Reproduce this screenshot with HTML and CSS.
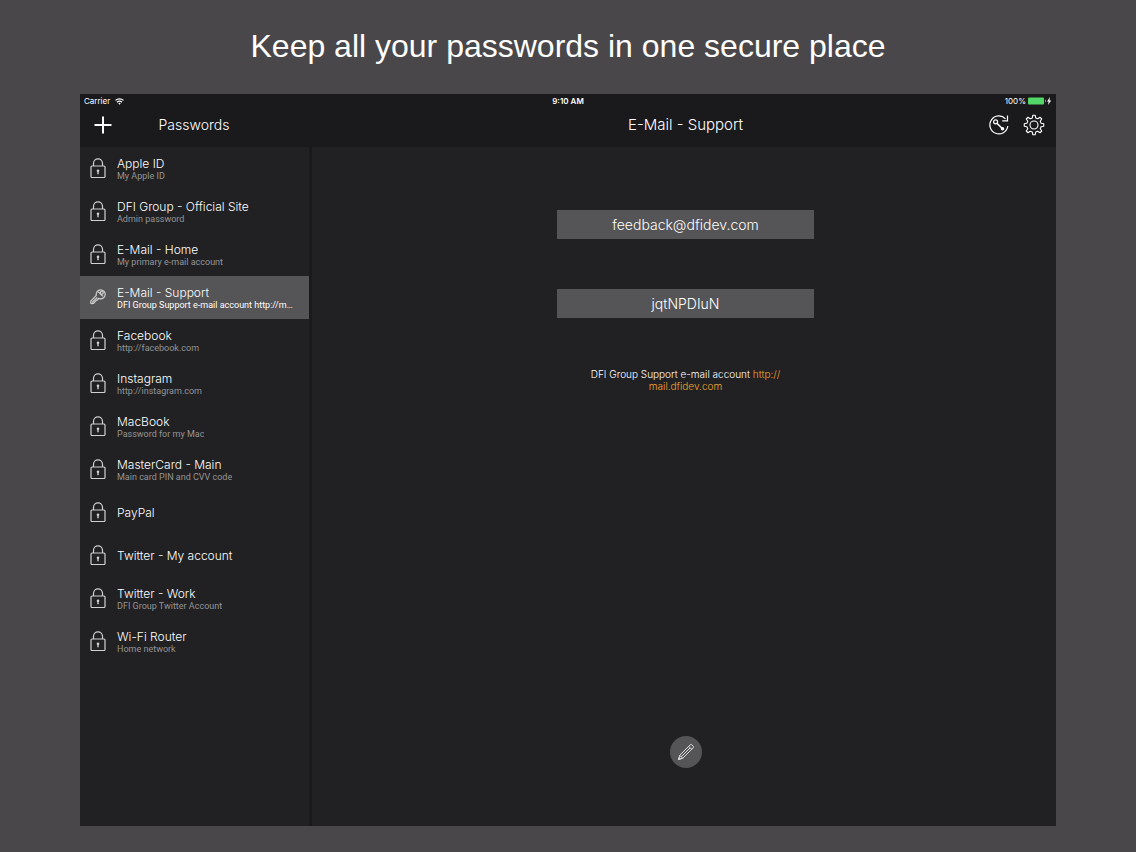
FILE: index.html
```html
<!DOCTYPE html>
<html lang="en">
<head>
<meta charset="UTF-8" />
<meta name="viewport" content="width=device-width, initial-scale=1.0"/>
<title>Passwords</title>
  <link rel="stylesheet" href="styles.css">
</head>

<body>

  <!-- Shared icons -->
  <svg class="sprite" aria-hidden="true">
    <symbol id="icon-lock" viewBox="0 0 16 22">
      <rect x="1" y="8" width="14" height="11.5" rx="1" fill="none" stroke="currentColor" stroke-width="1.2"/>
      <path d="M3.5 8V5.3a4.5 4.5 0 0 1 9 0v2.7" fill="none" stroke="currentColor" stroke-width="1.2"/>
      <circle cx="8" cy="12.8" r="1.3" fill="currentColor"/>
      <path d="M8 12.8v3.4" stroke="currentColor" stroke-width="1.4"/>
    </symbol>
    <symbol id="icon-key" viewBox="0 0 16 22">
      <g fill="none" stroke="currentColor" stroke-width="1.2" stroke-linejoin="round">
        <path d="M6.300 8.300a4.500 4.500 0 1 1 3.300 3.400L8 11.700l-.3 1.300-1.300.2-3 3.300-2 .2-.8-.9.200-1.600z"/>
        <path d="M2 15.700l5.200-5.400M8 4.600l4.900 4.700"/>
        <circle cx="11.800" cy="5.800" r="1.500"/>
      </g>
    </symbol>
  </svg>

  <h1 class="headline">Keep all your passwords in one secure place</h1>

  <div class="device">

    <header class="topbar">
      <div class="status">
        <div class="carrier">
          <span>Carrier</span>
          <svg width="9" height="7" viewBox="0 0 9 7" fill="none" stroke="currentColor" stroke-width="1.2">
            <path d="M.5 2.4a5.8 5.8 0 0 1 8 0M2 4.2a3.7 3.7 0 0 1 5 0"/>
            <path d="M3.3 5.3a1.8 1.8 0 0 1 2.4 0L4.5 6.7z" fill="currentColor" stroke="none"/>
          </svg>
        </div>
        <time class="clock">9:10 AM</time>
        <div class="battery">
          <span>100%</span>
          <svg width="24" height="8" viewBox="0 0 24 8">
            <rect x="0" y="0.5" width="16" height="7" rx="1" fill="#53d769"/>
            <path d="M17 2.5c1.2.5 1.2 2.5 0 3z" fill="#53d769"/>
            <path d="M22 0l-3 4.5h1.7L20 8l3.2-4.5h-1.8z" fill="#fff"/>
          </svg>
        </div>
      </div>

      <nav class="navbar">
        <div class="nav-side">
          <button class="icon-btn" type="button" aria-label="Add password">
            <svg width="18" height="18" viewBox="0 0 18 18" stroke="currentColor" stroke-width="2">
              <path d="M9 .5v17M.5 9h17"/>
            </svg>
          </button>
          <h2 class="list-title">Passwords</h2>
        </div>
        <div class="nav-main">
          <h2>E-Mail - Support</h2>
          <div class="nav-actions">
            <button class="icon-btn" type="button" aria-label="Generate password">
              <svg width="22" height="22" viewBox="0 0 22 22" fill="none" stroke="currentColor" stroke-width="1.2">
                <path d="M19.8 12.2A9 9 0 1 1 17.500 4.800"/>
                <path d="M19.5 1.5v5.300h-5.300"/>
                <circle cx="7.6" cy="7.8" r="2"/>
                <path d="M9 9.200l5 5" stroke-width="1.5"/>
                <circle cx="14.500" cy="14.700" r="1.200" fill="currentColor"/>
              </svg>
            </button>
            <button class="icon-btn" type="button" aria-label="Settings">
              <svg width="22" height="22" viewBox="0 0 22 22" fill="none" stroke="currentColor" stroke-width="1.1" stroke-linejoin="round">
                <circle cx="11" cy="11" r="4"/>
                <path id="gear" d=""/>
              </svg>
            </button>
          </div>
        </div>
      </nav>
    </header>

    <main class="content">
      <!-- Password list -->
      <ul class="password-list" id="password-list"></ul>

      <!-- Details -->
      <section class="detail">
        <div class="fields">
          <input type="text" value="feedback@dfidev.com" aria-label="Login" readonly />
          <input type="text" value="jqtNPDIuN" aria-label="Password" readonly />
          <p class="note">DFI Group Support e-mail account <a href="#">http://<wbr>mail.dfidev.com</a></p>
        </div>
        <button class="edit-btn" type="button" aria-label="Edit">
          <svg width="18" height="18" viewBox="0 0 18 18" fill="none" stroke="currentColor" stroke-width="1" stroke-linejoin="round">
            <path d="M1.500 16.500l1.200-4.200L13.200 1.800q.8-.8 1.600 0l1.400 1.400q.8.8 0 1.600L5.700 15.300z"/>
            <path d="M2.700 12.300l3 3M11.700 3.300l3 3M4.200 13.800l9-9"/>
            <path d="M1.500 16.500l.6-2 1.400 1.400z" fill="currentColor"/>
          </svg>
        </button>
      </section>
    </main>
  </div>

  <script src="script.js"></script>
</body>
</html>
```
FILE: styles.css
```css
:root {
  --page: #49474a;
  --bar: #1a191c;
  --panel: #212123;
  --field: #555456;
  --white: #ffffff;
  --muted: #949496;
  --link: #f5a52e;
}

* {
  box-sizing: border-box;
}

body {
  font-family: Inter, 'Helvetica Neue', sans-serif;
  background: var(--page);
  color: var(--white);
  margin: 0;
  padding: 0 80px 26px;
}

h1, h2, p, ul {
  margin: 0;
  padding: 0;
  font-weight: normal;
}

button, input {
  font: inherit;
  color: inherit;
  border: none;
  border-radius: 0;
}

svg {
  display: block;
  flex: none;
}

.sprite {
  position: absolute;
  width: 0;
  height: 0;
}

.headline {
  font-family: 'Liberation Sans', Arial, sans-serif;
  font-size: 32px;
  line-height: 40px;
  padding: 26px 0 28px;
  text-align: center;
}

.device {
  display: flex;
  flex-direction: column;
  aspect-ratio: 4 / 3;
  background: var(--panel);
}

/* Top bar */
.topbar {
  background: var(--bar);
}

.status {
  display: grid;
  grid-template-columns: 1fr auto 1fr;
  align-items: center;
  padding: 0 4px;
  font-size: 8px;
  line-height: 14px;
}

.carrier, .battery {
  display: flex;
  align-items: center;
  gap: 5px;
}

.battery {
  justify-content: flex-end;
  gap: 2px;
}

.clock {
  font-weight: 600;
}

.navbar {
  display: flex;
  height: 39px;
  padding-bottom: 6px;
}

.navbar h2 {
  font-size: 15px;
  font-weight: 300;
  line-height: 20px;
}

.nav-side {
  position: relative;
  display: flex;
  align-items: center;
  justify-content: center;
  width: 232px;
  padding-right: 4px;
}

.nav-side .icon-btn {
  position: absolute;
  left: 14px;
}

.navbar .list-title {
  font-size: 14px;
}

.nav-main {
  flex: 1;
  display: grid;
  grid-template-columns: 1fr auto 1fr;
  align-items: center;
  padding-left: 3px;
}

.nav-main h2 {
  grid-column: 2;
}

.nav-actions {
  display: flex;
  justify-content: flex-end;
  gap: 13px;
  padding-right: 11px;
}

.icon-btn {
  background: none;
  padding: 0;
  cursor: pointer;
}

/* List */
.content {
  flex: 1;
  display: flex;
}

.password-list {
  width: 232px;
  border-right: 3px solid var(--bar);
  list-style: none;
}

.row {
  display: flex;
  align-items: center;
  gap: 11px;
  width: 100%;
  height: 43px;
  padding: 0 14px 0 10px;
  background: none;
  text-align: left;
  cursor: pointer;
}

.row svg {
  color: #d0d0d0;
}

.row-text {
  min-width: 0;
}

.row-title {
  display: block;
  font-size: 12px;
  font-weight: 300;
  line-height: 15px;
}

.row-note {
  display: block;
  overflow: hidden;
  color: var(--muted);
  font-family: Roboto, sans-serif;
  font-size: 9px;
  line-height: 10px;
  text-overflow: ellipsis;
  white-space: nowrap;
}

.row.selected {
  background: var(--field);
}

.row.selected .row-note {
  color: var(--white);
}

/* Details */
.detail {
  flex: 1;
  display: flex;
  flex-direction: column;
  align-items: center;
  justify-content: space-between;
  padding: 63px 20px 58px 23px;
}

.fields {
  display: flex;
  flex-direction: column;
  align-items: center;
  gap: 50px;
}

.fields input {
  width: 257px;
  height: 29px;
  padding: 0;
  background: var(--field);
  font-size: 14px;
  font-weight: 300;
  text-align: center;
}

.note {
  max-width: 200px;
  font-size: 10px;
  font-weight: 300;
  line-height: 12px;
  text-align: center;
}

.note a {
  color: var(--link);
  text-decoration: none;
}

.edit-btn {
  display: flex;
  align-items: center;
  justify-content: center;
  width: 32px;
  height: 32px;
  padding: 0;
  border-radius: 50%;
  background: var(--field);
  color: #dddddd;
  cursor: pointer;
}
```
FILE: script.js
```javascript
const passwords = [
  { title: "Apple ID", note: "My Apple ID" },
  { title: "DFI Group - Official Site", note: "Admin password" },
  { title: "E-Mail - Home", note: "My primary e-mail account" },
  { title: "E-Mail - Support", note: "DFI Group Support e-mail account http://mail.dfidev.com", selected: true },
  { title: "Facebook", note: "http://facebook.com" },
  { title: "Instagram", note: "http://instagram.com" },
  { title: "MacBook", note: "Password for my Mac" },
  { title: "MasterCard - Main", note: "Main card PIN and CVV code" },
  { title: "PayPal", note: "" },
  { title: "Twitter - My account", note: "" },
  { title: "Twitter - Work", note: "DFI Group Twitter Account" },
  { title: "Wi-Fi Router", note: "Home network" },
];

document.getElementById('password-list').innerHTML = passwords.map(p => `
  <li>
    <button type="button" class="row${p.selected ? ' selected' : ''}">
      <svg width="16" height="22"><use href="#${p.selected ? 'icon-key' : 'icon-lock'}"/></svg>
      <span class="row-text">
        <span class="row-title">${p.title}</span>
        ${p.note ? `<span class="row-note">${p.note}</span>` : ''}
      </span>
    </button>
  </li>
`).join('');

// gear outline: eight teeth around the centre
function gearPath(teeth, inner, outer) {
  const points = [];
  const step = 2 * Math.PI / teeth;
  for (let i = 0; i < teeth; i++) {
    [[-0.3, inner], [-0.16, outer], [0.16, outer], [0.3, inner]].forEach(([t, r]) => {
      const a = (i + t) * step;
      points.push((11 + r * Math.sin(a)).toFixed(2) + ' ' + (11 - r * Math.cos(a)).toFixed(2));
    });
  }
  return 'M' + points.join('L') + 'Z';
}

document.getElementById('gear').setAttribute('d', gearPath(8, 7.3, 9.8));
```
